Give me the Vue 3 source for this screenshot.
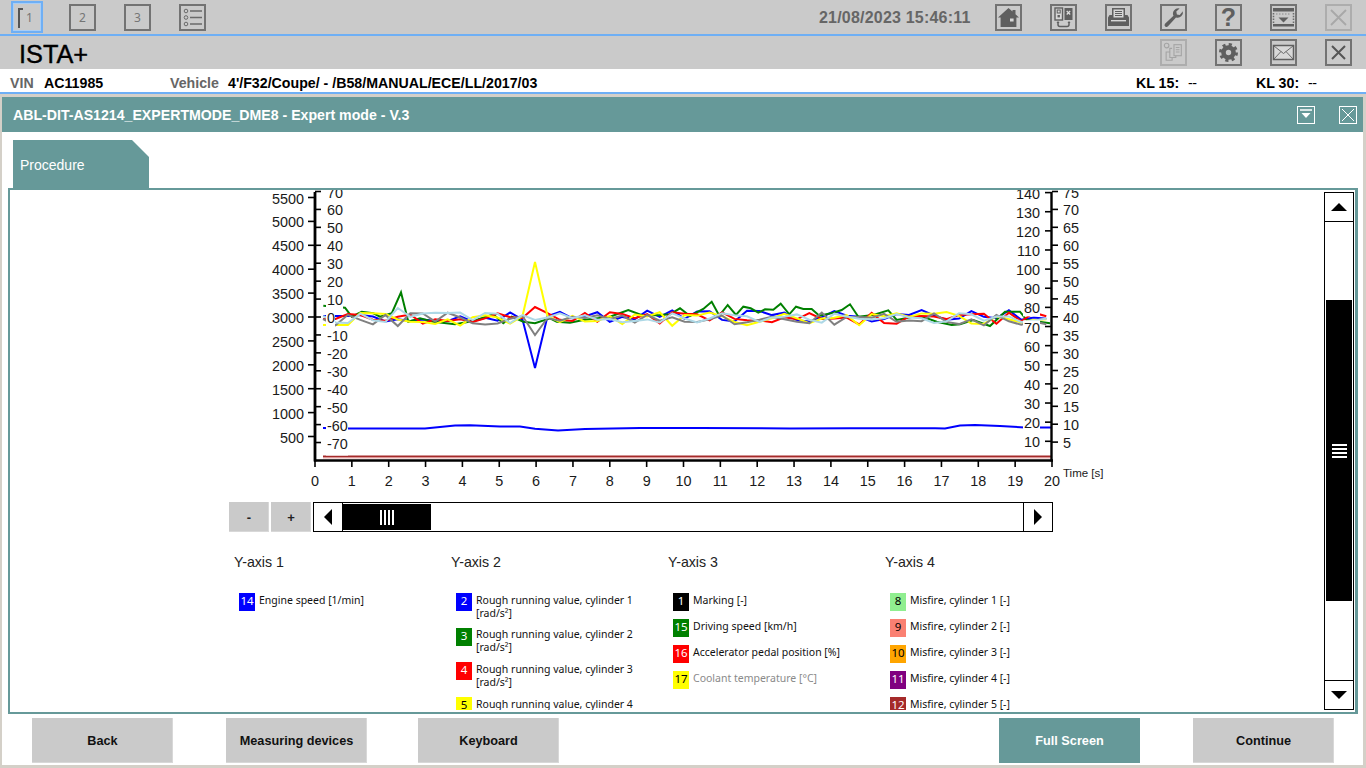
<script setup>
const topLeft = ['2', '3']
const xTicks = Array.from({ length: 21 }, (_, i) => ({ v: i, x: 315 + i * 36.85 }))
const axis1 = Array.from({ length: 11 }, (_, i) => ({ v: String(5500 - i * 500), y: 197.5 + i * 23.9 }))
const axis2 = Array.from({ length: 15 }, (_, i) => ({ v: String(70 - i * 10), y: 191.5 + i * 17.93 }))
const axis3 = Array.from({ length: 14 }, (_, i) => ({ v: String(140 - i * 10), y: 192.6 + i * 19.13 }))
const axis4 = Array.from({ length: 15 }, (_, i) => ({ v: String(75 - i * 5), y: 191.5 + i * 17.9 }))

function noise(seed, base, amp, spikes) {
  let s = seed
  const pts = []
  for (let i = 0; i < 59; i++) {
    s = (s * 16807) % 2147483647
    const r = (s % 1000) / 1000 - 0.5
    let y = base + r * amp * 2
    if (spikes[i] !== undefined) y = spikes[i]
    pts.push((323 + i * 12.47).toFixed(1) + ',' + y.toFixed(1))
  }
  return pts.join(' ')
}
const zoomL = [[190,362],[255,368],[275,395],[305,380],[340,385],[360,395],[395,385],[423,322],[445,410],[480,400],[520,410],[585,418],[640,408],[700,388],[730,415],[755,395],[790,410],[825,415],[870,400],[890,410],[930,413],[970,405],[1050,395],[1105,375],[1150,392]]
const zoomR = [[0,390],[30,388],[60,370],[90,393],[130,372],[155,350],[178,392],[203,360],[228,390],[250,365],[272,370],[295,383],[315,373],[340,374],[362,356],[388,388],[408,365],[430,372],[455,372],[478,392],[520,383],[545,375],[570,358],[595,395],[640,390],[685,376],[710,405],[760,395],[800,400],[830,410],[875,420],[900,418],[940,405],[990,423],[1035,380],[1080,380],[1100,405],[1170,415]]
const green = [
  ...zoomL.map(p => (260 + p[0] / 3).toFixed(1) + ',' + (185 + p[1] / 3).toFixed(1)),
  ...zoomR.map(p => (660 + p[0] / 3).toFixed(1) + ',' + (185 + p[1] / 3).toFixed(1)),
].join(' ')
const engine = [[323,428],[345,428.5],[390,428.5],[425,428.5],[455,425.5],[470,425.3],[500,426.5],[520,426.5],[535,428.8],[558,430.4],[585,429],[640,428],[700,428],[790,428.5],[850,428.3],[935,428.3],[945,428.5],[960,425.5],[975,425],[1000,426],[1025,427.5],[1052,427.5]].map(p => p.join(',')).join(' ')
const series = [
  { c: '#0000ff', p: noise(1234, 316, 6, { 0: 316, 1: 316, 2: 316, 17: 368 }) },
  { c: '#008000', p: green },
  { c: '#ff0000', p: noise(5511, 318, 6.5, { 0: 319, 1: 319, 17: 307 }) },
  { c: '#ffff00', p: noise(7777, 319, 7, { 0: 325, 1: 325, 2: 325, 16: 316, 17: 262, 18: 316 }) },
  { c: '#808080', p: noise(9191, 319, 6.5, { 0: 319, 6: 326, 16: 316, 17: 335, 18: 318 }) },
  { c: '#add8e6', p: noise(3141, 318, 5.5, { 0: 316, 6: 308, 17: 320 }) },
]
const numW = s => (s.length - (s[0] === '-' ? 1 : 0)) * 8 + (s[0] === '-' ? 5 : 0) + 1

const legend = [
  { title: 'Y-axis 1', items: [{ n: 14, bg: '#0000ff', fg: '#fff', t: 'Engine speed [1/min]' }] },
  { title: 'Y-axis 2', items: [
    { n: 2, bg: '#0000ff', fg: '#fff', t: 'Rough running value, cylinder 1 [rad/s²]' },
    { n: 3, bg: '#008000', fg: '#fff', t: 'Rough running value, cylinder 2 [rad/s²]' },
    { n: 4, bg: '#ff0000', fg: '#fff', t: 'Rough running value, cylinder 3 [rad/s²]' },
    { n: 5, bg: '#ffff00', fg: '#000', t: 'Rough running value, cylinder 4 [rad/s²]' },
  ] },
  { title: 'Y-axis 3', items: [
    { n: 1, bg: '#000000', fg: '#fff', t: 'Marking [-]' },
    { n: 15, bg: '#008000', fg: '#fff', t: 'Driving speed [km/h]' },
    { n: 16, bg: '#ff0000', fg: '#fff', t: 'Accelerator pedal position [%]' },
    { n: 17, bg: '#ffff00', fg: '#000', t: 'Coolant temperature [°C]', dim: true },
  ] },
  { title: 'Y-axis 4', items: [
    { n: 8, bg: '#90ee90', fg: '#000', t: 'Misfire, cylinder 1 [-]' },
    { n: 9, bg: '#fa8072', fg: '#000', t: 'Misfire, cylinder 2 [-]' },
    { n: 10, bg: '#ffa500', fg: '#000', t: 'Misfire, cylinder 3 [-]' },
    { n: 11, bg: '#800080', fg: '#fff', t: 'Misfire, cylinder 4 [-]' },
    { n: 12, bg: '#a52a2a', fg: '#fff', t: 'Misfire, cylinder 5 [-]' },
  ] },
]
</script>

<template>
  <div class="shell">
    <header class="bar bar1">
      <div class="step selected"><span class="bracket"></span><span>1</span></div>
      <div v-for="n in topLeft" :key="n" class="icon-btn step">{{ n }}</div>
      <div class="icon-btn list-btn">
        <svg width="23" height="23" viewBox="0 0 23 23" fill="none" stroke="#6a6a6a">
          <circle cx="5" cy="5" r="1.8" /><circle cx="5" cy="11.5" r="1.8" /><circle cx="5" cy="18" r="1.8" />
          <path d="M9 5h12M9 11.5h12M9 18h12" stroke-width="1.4" />
        </svg>
      </div>
      <div class="date">21/08/2023 15:46:11</div>
      <div class="icon-btn first-right">
        <svg width="23" height="23" viewBox="0 0 23 23">
          <path fill="#5f5f5f" d="M11.5 2 1 11.5h2.6V21h15.8v-9.500H22L18.500 8.300V4h-3v1.600z" />
          <rect x="13" y="12.500" width="3.600" height="3" fill="#d8d8d8" />
        </svg>
      </div>
      <div class="icon-btn">
        <svg width="23" height="23" viewBox="0 0 23 23" fill="none">
          <rect x="3" y="2" width="7.500" height="12" fill="#d8d8d8" stroke="#5f5f5f" stroke-width="1.4" />
          <rect x="5.200" y="4" width="3" height="3" fill="none" stroke="#5f5f5f" />
          <rect x="5.500" y="9" width="2.400" height="2.400" fill="#5f5f5f" />
          <rect x="12.500" y="2" width="8" height="12" fill="#5f5f5f" />
          <path d="M14.700 5l3.500 3.500M18.200 5l-3.500 3.500" stroke="#e0e0e0" stroke-width="1.2" />
          <path d="M6 16v2.500a2 2 0 0 0 2 2h7a2 2 0 0 0 2-2V16" stroke="#5f5f5f" stroke-width="1.500" />
          <path d="M4.500 17l1.500-2 1.500 2zM15.500 17l1.500-2 1.500 2z" fill="#5f5f5f" />
        </svg>
      </div>
      <div class="icon-btn">
        <svg width="23" height="23" viewBox="0 0 23 23">
          <path fill="#5f5f5f" d="M5 2h13v7h2.500L22 11.500V20H1v-8.500L2.500 9H5z" />
          <rect x="6.500" y="3.500" width="10" height="8" fill="#d8d8d8" />
          <path d="M8 5.500h7M8 7.500h7M8 9.500h7" stroke="#5f5f5f" stroke-width="1" />
          <rect x="4" y="14" width="15" height="1.400" fill="#d8d8d8" />
        </svg>
      </div>
      <div class="icon-btn">
        <svg width="23" height="23" viewBox="0 0 23 23">
          <path fill="#5f5f5f" d="M20.800 5.200a5.300 5.300 0 0 1-6.800 6.300L6 20.300a1.900 1.900 0 0 1-3-2.500l8.500-8A5.300 5.300 0 0 1 17.600 2.400L14.300 5.600l.6 2.900 2.800.6z" />
        </svg>
      </div>
      <div class="icon-btn help">?</div>
      <div class="icon-btn">
        <svg width="23" height="23" viewBox="0 0 23 23">
          <rect x="1" y="2" width="21" height="3.500" fill="#5f5f5f" />
          <rect x="1" y="18" width="21" height="2.500" fill="#5f5f5f" />
          <path d="M1.500 7v10M21.500 7v10" stroke="#6a6a6a" stroke-width="1.500" stroke-dasharray="1.500 1.300" />
          <path d="M6.500 11.500h10l-5 5z" fill="#5f5f5f" />
          <path d="M4 8h15" stroke="#8a8a8a" stroke-dasharray="1.500 1.500" />
        </svg>
      </div>
      <div class="icon-btn disabled">
        <svg width="23" height="23" viewBox="0 0 23 23"><path d="M4 4l15 15M19 4L4 19" stroke="#a8a8a8" stroke-width="1.800" /></svg>
      </div>
    </header>

    <div class="bar bar2">
      <div class="brand">ISTA+</div>
      <div class="icon-btn disabled first-right">
        <svg width="25" height="25" viewBox="0 0 25 25" fill="none" stroke="#a4a4a4" stroke-width="1.200">
          <circle cx="5" cy="5" r="2.500" />
          <rect x="13" y="4" width="8" height="12" />
          <path d="M15 7h4M15 9.500h4M15 12h4" />
          <path d="M11 8H8.500v10H15v-2M8 12H4.500v9H11v-3" />
        </svg>
      </div>
      <div class="icon-btn">
        <svg width="23" height="23" viewBox="0 0 23 23" fill="none">
          <circle cx="11.500" cy="11.500" r="5" stroke="#5f5f5f" stroke-width="4.600" />
          <circle cx="11.500" cy="11.500" r="8" stroke="#5f5f5f" stroke-width="3" stroke-dasharray="3.100 3.180" />
        </svg>
      </div>
      <div class="icon-btn">
        <svg width="23" height="23" viewBox="0 0 23 23" fill="#d8d8d8" stroke="#5f5f5f">
          <rect x="1.500" y="4.500" width="20" height="14" stroke-width="1.500" />
          <path d="M2 5l9.500 7.500L21 5M2 18l7-7.500M21 18l-7-7.500" fill="none" stroke-width="0.900" />
        </svg>
      </div>
      <div class="icon-btn">
        <svg width="23" height="23" viewBox="0 0 23 23"><path d="M5 5l13 13M18 5L5 18" stroke="#555" stroke-width="2" /></svg>
      </div>
    </div>

    <div class="vehicle">
      <span class="lbl vin-l">VIN</span><span class="val vin-v">AC11985</span>
      <span class="lbl veh-l">Vehicle</span><span class="val veh-v">4'/F32/Coupe/ - /B58/MANUAL/ECE/LL/2017/03</span>
      <span class="val kl15">KL 15:</span><span class="val dash dash15">--</span>
      <span class="val kl30">KL 30:</span><span class="val dash dash30">--</span>
    </div>

    <section class="window">
      <div class="win-head">
        <span class="win-title">ABL-DIT-AS1214_EXPERTMODE_DME8 - Expert mode - V.3</span>
        <span class="win-btn win-min">
          <svg width="16" height="16" viewBox="0 0 16 16"><path d="M2 3h12" stroke="#fff" stroke-width="1.500" /><path d="M3.500 6h9L8 11z" fill="#fff" /></svg>
        </span>
        <span class="win-btn">
          <svg width="16" height="16" viewBox="0 0 16 16"><path d="M2 2l12 12M14 2L2 14" stroke="#fff" stroke-width="1" /></svg>
        </span>
      </div>
      <div class="tabs"><div class="tab">Procedure</div></div>
      <div class="frame">
        <div class="main">
          <svg class="chart" width="1100" height="305" viewBox="10 190 1100 305">
            <polyline v-for="(s, i) in series" :key="i" :points="s.p" fill="none" :stroke="s.c" stroke-width="2" />
            <polyline :points="engine" fill="none" stroke="#0000ff" stroke-width="2" />
            <path d="M323 456.500H1052" stroke="#a52a2a" stroke-width="2" />
            <path d="M323 458H1052" stroke="#e8a0a0" stroke-width="0.800" />

            <g v-for="t in axis2" :key="'a2' + t.v">
              <rect x="326" :y="t.y - 2" :width="numW(t.v)" height="15" fill="#fff" />
              <path :d="`M315 ${t.y}h6`" stroke="#000" stroke-width="1.600" />
              <text class="num" x="327" :y="t.y + 6">{{ t.v }}</text>
            </g>
            <g v-for="t in axis3" :key="'a3' + t.v">
              <rect :x="1040 - numW(t.v)" :y="t.y - 6" :width="numW(t.v)" height="15" fill="#fff" />
              <path :d="`M1045 ${t.y}h7`" stroke="#000" stroke-width="1.600" />
              <text class="num" x="1040" :y="t.y + 6" text-anchor="end">{{ t.v }}</text>
            </g>
            <g v-for="t in axis1" :key="'a1' + t.v">
              <path :d="`M308 ${t.y}h7`" stroke="#000" stroke-width="1.600" />
              <text class="num" x="304" :y="t.y + 6" text-anchor="end">{{ t.v }}</text>
            </g>
            <g v-for="t in axis4" :key="'a4' + t.v">
              <path :d="`M1052 ${t.y}h6`" stroke="#000" stroke-width="1.600" />
              <text class="num" x="1063" :y="t.y + 6">{{ t.v }}</text>
            </g>
            <path d="M315 192V461.500" stroke="#000" stroke-width="2.800" />
            <path d="M1051.500 192V461.500" stroke="#000" stroke-width="2.400" />
            <path d="M314 460.500H1053" stroke="#000" stroke-width="2.600" />
            <g v-for="t in xTicks" :key="'x' + t.v">
              <path :d="`M${t.x} 461v6`" stroke="#000" stroke-width="1.600" />
              <text class="num" :x="t.x" y="486" text-anchor="middle">{{ t.v }}</text>
            </g>
            <text class="time" x="1063" y="477">Time [s]</text>
          </svg>

          <div class="zoom-row">
            <button class="zoom-btn">-</button>
            <button class="zoom-btn">+</button>
            <div class="hscroll">
              <span class="h-arrow h-left"><i class="tri-left"></i></span>
              <span class="h-thumb"><i class="grip"></i></span>
              <span class="h-arrow h-right"><i class="tri-right"></i></span>
            </div>
          </div>

          <div class="legend">
            <div v-for="col in legend" :key="col.title" class="col">
              <div class="col-title">{{ col.title }}</div>
              <div v-for="it in col.items" :key="it.n" class="item">
                <span class="badge" :style="{ background: it.bg, color: it.fg }">{{ it.n }}</span>
                <span class="item-text" :class="{ dim: it.dim }">{{ it.t }}</span>
              </div>
            </div>
          </div>
        </div>
        <div class="vscroll">
          <span class="v-arrow v-up"><i class="tri-up"></i></span>
          <div class="v-track">
            <span class="v-thumb"><i class="v-grip"></i></span>
          </div>
          <span class="v-arrow v-down"><i class="tri-down"></i></span>
        </div>
      </div>
      <footer class="actions">
        <button class="act a-back">Back</button>
        <button class="act a-meas">Measuring devices</button>
        <button class="act a-key">Keyboard</button>
        <button class="act teal a-full">Full Screen</button>
        <button class="act a-cont">Continue</button>
      </footer>
    </section>
  </div>
</template>

<style scoped>
* { box-sizing: border-box; }
.shell {
  width: 1366px; height: 768px; overflow: hidden; display: flex; flex-direction: column;
  font-family: "Liberation Sans", Arial, sans-serif; background: #fff; color: #000;
}
.bar { background: #cacaca; display: flex; align-items: flex-start; position: relative; }
.bar1 { height: 36px; border-bottom: 2px solid #6eaff5; padding: 4px 14px 0 11px; }
.bar2 { height: 33px; padding: 3px 14px 0 19px; }
.icon-btn {
  width: 27px; height: 27px; border: 2px solid #737373; margin-left: 28px;
  display: flex; align-items: center; justify-content: center; flex: none;
}
.step { font-size: 12px; color: #757575; font-family: "Noto Sans", sans-serif; }
.selected {
  width: 32px; height: 32px; margin: -3px 0 0 0; border: 2px solid #6eaff5;
  outline: 1px solid #a8cdf5; outline-offset: -3px; display: flex; align-items: center; justify-content: center;
  position: relative; padding-left: 5px;
}
.bracket { position: absolute; left: 5px; top: 5px; width: 5px; height: 20px; border-left: 2px solid #555; border-top: 2px solid #555; }
.selected + .icon-btn { margin-left: 26px; }
.list-btn { margin-left: 28px; }
.date { margin-left: 613px; width: 162px; font-size: 16px; font-weight: bold; color: #666; line-height: 27px; letter-spacing: .2px; white-space: nowrap; }
.first-right { margin-left: 24px; }
.date + .first-right { margin-left: 14px; }
.help { font-size: 25px; font-weight: bold; color: #5f5f5f; line-height: 1; }
.disabled { border-color: #adadad; }
.brand { font-size: 25.300px; line-height: 28px; margin-top: 1px; -webkit-text-stroke: .4px #000; width: 1114px; flex: none; }
.bar2 .first-right { margin-left: 28px; }
.bar2 .brand + .first-right { margin-left: 27px; }

.vehicle { height: 25px; border-bottom: 2px solid #6eaff5; position: relative; font-size: 14.200px; font-weight: bold; line-height: 28px; }
.vehicle span { position: absolute; top: 0; white-space: nowrap; }
.vehicle .dash { font-weight: normal; letter-spacing: -.5px; }
.lbl { color: #666; }
.vin-l { left: 10px; } .vin-v { left: 44px; } .veh-l { left: 170px; } .veh-v { left: 228px; }
.kl15 { left: 1136px; } .dash15 { left: 1188px; } .kl30 { left: 1256px; } .dash30 { left: 1308px; }

.window { flex: 1; min-height: 0; border: solid #d4d0c8; border-width: 3px 3px 3px 2px; display: flex; flex-direction: column; }
.win-head { height: 35px; background: #669999; display: flex; align-items: center; padding-right: 6px; flex: none; }
.win-title { flex: 1; padding-left: 11px; color: #fff; font-weight: bold; font-size: 14.150px; white-space: nowrap; }
.win-btn { width: 18px; height: 18px; border: 1px solid #fff; display: flex; align-items: center; justify-content: center; margin-left: 24px; }
.tabs { padding: 8px 0 0 11px; flex: none; }
.tab {
  width: 136px; height: 48px; background: #669999; color: #fff; font-size: 14px; padding: 17px 0 0 7px;
  clip-path: polygon(0 0, 119px 0, 136px 17px, 136px 100%, 0 100%);
}
.frame { margin: 0 5px 0 6px; height: 526px; border: 2px solid #669999; border-right-width: 3px; display: flex; flex: none; }
.main { flex: 1; min-width: 0; height: 520px; overflow: hidden; }
.chart { display: block; }
.num { font-size: 14.400px; fill: #1a1a1a; font-family: "Liberation Sans", Arial, sans-serif; }
.time { font-size: 11.500px; fill: #1a1a1a; font-family: "Liberation Sans", Arial, sans-serif; }
.zoom-row { display: flex; margin: 7px 0 0 219px; height: 30px; }
.zoom-btn {
  width: 40px; height: 30px; margin-right: 2px; background: #cacaca; border: none; box-shadow: inset -1px -1px 0 #d8d8d8;
  font: bold 13px "Liberation Sans", Arial, sans-serif; color: #222; padding: 0;
}
.hscroll { width: 740px; height: 30px; border: 1px solid #000; border-width: 1.500px; display: flex; align-items: stretch; background: #fff; }
.h-arrow { width: 29px; display: flex; align-items: center; justify-content: center; flex: none; }
.h-left { border-right: 1px solid #000; }
.h-right { border-left: 1px solid #000; margin-left: auto; }
.h-thumb { width: 88px; margin: 1px 0; background: #000; display: flex; align-items: center; justify-content: center; }
.grip { width: 15px; height: 15px; background: repeating-linear-gradient(90deg, #fff 0 2px, #000 2px 4px); }
.tri-left { border-style: solid; border-width: 8px 8px 8px 0; border-color: transparent #000 transparent transparent; }
.tri-right { border-style: solid; border-width: 8px 0 8px 8px; border-color: transparent transparent transparent #000; }
.legend { display: flex; margin: 21px 0 0 224px; }
.col { width: 217px; flex: none; }
.col-title { font-size: 14.200px; line-height: 18px; color: #222; margin-bottom: 22px; height: 18px; }
.item { display: flex; margin: 0 0 8px 5px; min-height: 18px; }
.badge { width: 16px; height: 18px; flex: none; text-align: center; font: 11.500px/15px "Noto Sans", sans-serif; margin-right: 4px; }
.item-text { font: 10.500px/13px "Noto Sans", sans-serif; width: 162px; color: #111; padding-top: .7px; }
.dim { color: #8a8a8a; }
.vscroll { width: 30px; margin: 2px 1px 2px 0; border: 1.500px solid #000; display: flex; flex-direction: column; flex: none; background: #fff; }
.v-arrow { height: 29px; display: flex; align-items: center; justify-content: center; flex: none; }
.v-up { border-bottom: 1.500px solid #000; }
.v-down { border-top: 1.500px solid #000; }
.v-track { flex: 1; position: relative; }
.v-thumb { position: absolute; left: 1px; right: 1px; top: 78px; height: 301px; background: #000; display: flex; align-items: center; justify-content: center; }
.v-grip { width: 15px; height: 15px; background: repeating-linear-gradient(0deg, #fff 0 2px, #000 2px 4px); }
.tri-up { border-style: solid; border-width: 0 8px 8px; border-color: transparent transparent #000; }
.tri-down { border-style: solid; border-width: 8px 8px 0; border-color: #000 transparent transparent; }
.actions { flex: 1; display: flex; padding: 4px 0 2px 30px; background: #fff; }
.act {
  width: 141px; height: 45px; border: none; background: #cacaca; box-shadow: inset -1px -1px 0 #d8d8d8;
  font: bold 12.700px "Liberation Sans", Arial, sans-serif; color: #111; padding: 0; flex: none;
}
.teal { background: #669999; color: #fff; box-shadow: none; }
.a-meas { margin-left: 53px; } .a-key { margin-left: 51px; } .a-full { margin-left: 440px; } .a-cont { margin-left: 53px; }
</style>
